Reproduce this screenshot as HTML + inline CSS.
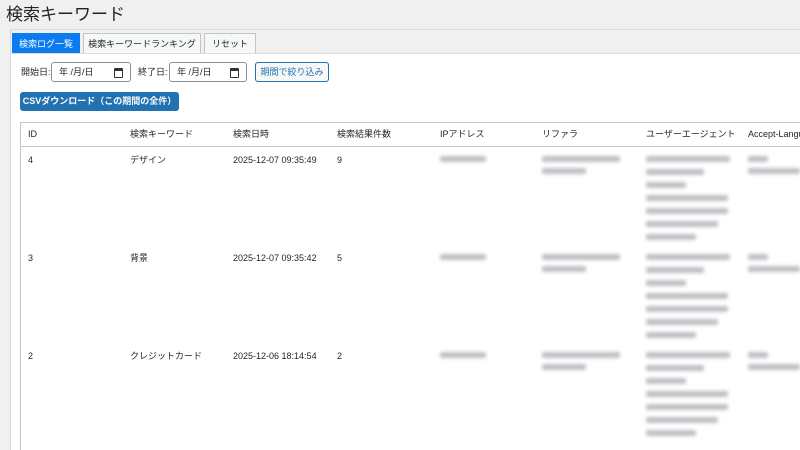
<!DOCTYPE html><html><head><meta charset="utf-8"><style>
html,body{margin:0;width:800px;height:450px;overflow:hidden}
body{background:#f0f0f1;font-family:"Liberation Sans","Noto Sans CJK JP",sans-serif;color:#1d2327;position:relative}
.a{position:absolute}
h1{position:absolute;left:6px;top:4px;margin:0;font-size:17px;font-weight:400;line-height:22px}
.panel{left:10px;top:29px;width:790px;height:421px;background:#fff;border-left:1px solid #dcdcde;border-top:1px solid #dcdcde}
.tabbar{left:11px;top:30px;width:789px;height:23px;background:#f0f0f1;border-bottom:1px solid #dcdcde}
.tab{top:33px;height:20px;font-size:9px;line-height:20px;text-align:center;border:1px solid #c3c4c7;border-bottom:none;background:#f6f7f7;box-sizing:border-box}
.lbl{font-size:9px;top:66px;line-height:12px}
.date{top:62px;height:20px;border:1px solid #8c8f94;border-radius:3px;font-size:9px;line-height:18px;box-sizing:border-box;padding-left:7px;background:#fff}
.cal{position:absolute;right:7px;top:5px;width:7px;height:6px;border:1.5px solid #333;border-top-width:3px;border-radius:1px}
.btn2{left:255px;top:62px;width:74px;height:20px;border:1px solid #2271b1;border-radius:3px;background:#f6f7f7;color:#2271b1;font-size:9px;line-height:18px;text-align:center;box-sizing:border-box}
.csv{left:20px;top:92px;width:159px;height:19px;background:#2271b1;border-radius:3px;color:#fff;font-size:9px;font-weight:bold;line-height:19px;text-align:center}
.tbl{left:20px;top:122px;width:780px;height:328px;border-left:1px solid #c3c4c7;border-top:1px solid #c3c4c7}
.hdr{left:21px;top:146px;width:779px;height:1px;background:#c3c4c7}
.t{font-size:9px;position:absolute;line-height:12px;white-space:nowrap}
.bl{position:absolute;background:#bfc0c4;filter:blur(1.8px);height:6px;border-radius:2px}
</style></head><body>
<h1>検索キーワード</h1>
<div class="a panel"></div>
<div class="a tabbar"></div>
<div class="a tab" style="left:12px;width:68px;background:#0a7cf0;border-color:#0a7cf0;color:#fff">検索ログ一覧</div>
<div class="a tab" style="left:83px;width:118px">検索キーワードランキング</div>
<div class="a tab" style="left:204px;width:52px">リセット</div>
<div class="a lbl" style="left:21px">開始日:</div>
<div class="a date" style="left:51px;width:80px">年 /月/日<span class="cal"></span></div>
<div class="a lbl" style="left:138px">終了日:</div>
<div class="a date" style="left:169px;width:78px">年 /月/日<span class="cal"></span></div>
<div class="a btn2">期間で絞り込み</div>
<div class="a csv">CSVダウンロード（この期間の全件）</div>
<div class="a tbl"></div>
<div class="a hdr"></div>
<div class="t" style="left:28px;top:128px">ID</div>
<div class="t" style="left:130px;top:128px">検索キーワード</div>
<div class="t" style="left:233px;top:128px">検索日時</div>
<div class="t" style="left:337px;top:128px">検索結果件数</div>
<div class="t" style="left:440px;top:128px">IPアドレス</div>
<div class="t" style="left:542px;top:128px">リファラ</div>
<div class="t" style="left:646px;top:128px">ユーザーエージェント</div>
<div class="t" style="left:748px;top:128px">Accept-Language</div>

<div class="t" style="left:28px;top:154px">4</div><div class="t" style="left:130px;top:154px">デザイン</div><div class="t" style="left:233px;top:154px">2025-12-07 09:35:49</div><div class="t" style="left:337px;top:154px">9</div>
<div class="t" style="left:28px;top:252px">3</div><div class="t" style="left:130px;top:252px">背景</div><div class="t" style="left:233px;top:252px">2025-12-07 09:35:42</div><div class="t" style="left:337px;top:252px">5</div>
<div class="t" style="left:28px;top:350px">2</div><div class="t" style="left:130px;top:350px">クレジットカード</div><div class="t" style="left:233px;top:350px">2025-12-06 18:14:54</div><div class="t" style="left:337px;top:350px">2</div>

<div class="bl" style="left:440px;top:156px;width:46px"></div>
<div class="bl" style="left:542px;top:156px;width:78px"></div><div class="bl" style="left:542px;top:168px;width:44px"></div>
<div class="bl" style="left:646px;top:156px;width:84px"></div><div class="bl" style="left:646px;top:169px;width:58px"></div><div class="bl" style="left:646px;top:182px;width:40px"></div><div class="bl" style="left:646px;top:195px;width:82px"></div><div class="bl" style="left:646px;top:208px;width:82px"></div><div class="bl" style="left:646px;top:221px;width:72px"></div><div class="bl" style="left:646px;top:234px;width:50px"></div>
<div class="bl" style="left:748px;top:156px;width:20px"></div><div class="bl" style="left:748px;top:168px;width:52px"></div>

<div class="bl" style="left:440px;top:254px;width:46px"></div>
<div class="bl" style="left:542px;top:254px;width:78px"></div><div class="bl" style="left:542px;top:266px;width:44px"></div>
<div class="bl" style="left:646px;top:254px;width:84px"></div><div class="bl" style="left:646px;top:267px;width:58px"></div><div class="bl" style="left:646px;top:280px;width:40px"></div><div class="bl" style="left:646px;top:293px;width:82px"></div><div class="bl" style="left:646px;top:306px;width:82px"></div><div class="bl" style="left:646px;top:319px;width:72px"></div><div class="bl" style="left:646px;top:332px;width:50px"></div>
<div class="bl" style="left:748px;top:254px;width:20px"></div><div class="bl" style="left:748px;top:266px;width:52px"></div>

<div class="bl" style="left:440px;top:352px;width:46px"></div>
<div class="bl" style="left:542px;top:352px;width:78px"></div><div class="bl" style="left:542px;top:364px;width:44px"></div>
<div class="bl" style="left:646px;top:352px;width:84px"></div><div class="bl" style="left:646px;top:365px;width:58px"></div><div class="bl" style="left:646px;top:378px;width:40px"></div><div class="bl" style="left:646px;top:391px;width:82px"></div><div class="bl" style="left:646px;top:404px;width:82px"></div><div class="bl" style="left:646px;top:417px;width:72px"></div><div class="bl" style="left:646px;top:430px;width:50px"></div>
<div class="bl" style="left:748px;top:352px;width:20px"></div><div class="bl" style="left:748px;top:364px;width:52px"></div>
</body></html>
